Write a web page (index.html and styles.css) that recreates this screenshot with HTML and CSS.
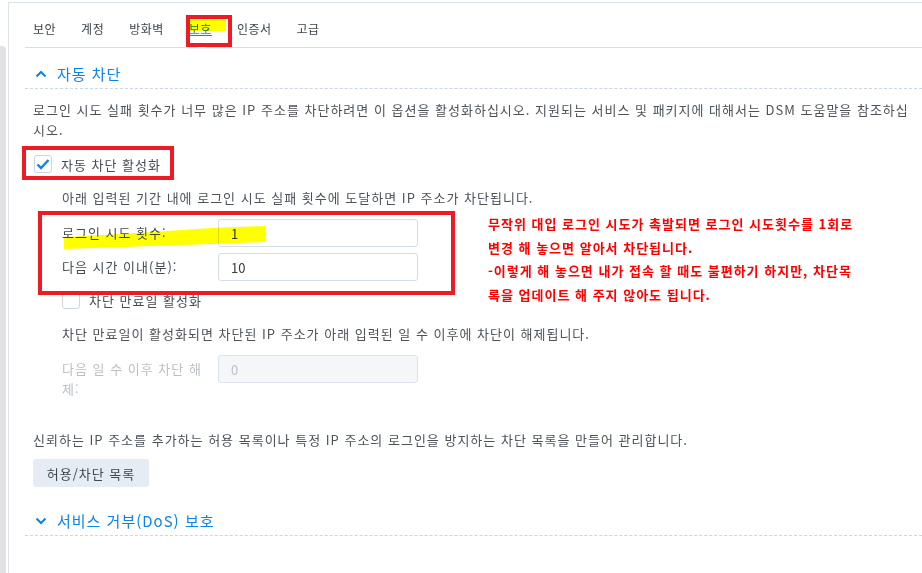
FILE: index.html
```html
<!DOCTYPE html>
<html lang="ko">
<head>
    <meta charset="UTF-8">
    <meta name="viewport" content="width=device-width, initial-scale=1.0">
    <title>보호 - 자동 차단</title>
    <link rel="stylesheet" href="styles.css">
</head>
<body>
    <div class="page">
        <div class="rail"><div class="rail-thumb"></div></div>
        <div class="panel">
            <div class="tabs">
                <span class="tab">보안</span>
                <span class="tab">계정</span>
                <span class="tab">방화벽</span>
                <span class="tab active">보호</span>
                <span class="tab">인증서</span>
                <span class="tab">고급</span>
            </div>

            <div class="section-head">
                <svg class="chevron" width="12" height="8" viewBox="0 0 12 8"><path d="M1.5 6.5 L6 2 L10.5 6.5" fill="none" stroke="currentColor" stroke-width="2"/></svg>
                <span>자동 차단</span>
            </div>

            <div class="section-body">
                <p class="desc">로그인 시도 실패 횟수가 너무 많은 IP 주소를 차단하려면 이 옵션을 활성화하십시오. 지원되는 서비스 및 패키지에 대해서는 DSM 도움말을 참조하십시오.</p>

                <div class="check first">
                    <span class="box">
                        <svg width="14" height="12" viewBox="0 0 14 12"><path d="M1.5 6.5 L5 10 L12.5 2" fill="none" stroke="#1283e0" stroke-width="2.4"/></svg>
                    </span>
                    <span>자동 차단 활성화</span>
                </div>

                <div class="indent">
                    <p class="note">아래 입력된 기간 내에 로그인 시도 실패 횟수에 도달하면 IP 주소가 차단됩니다.</p>
                    <div class="form-grid">
                        <span class="field-label">로그인 시도 횟수:</span>
                        <input class="field" type="text" value="1">
                        <span class="field-label">다음 시간 이내(분):</span>
                        <input class="field" type="text" value="10">
                    </div>

                    <div class="check second">
                        <span class="box"></span>
                        <span>차단 만료일 활성화</span>
                    </div>
                    <p class="note">차단 만료일이 활성화되면 차단된 IP 주소가 아래 입력된 일 수 이후에 차단이 해제됩니다.</p>
                    <div class="form-grid disabled">
                        <span class="field-label">다음 일 수 이후 차단 해제:</span>
                        <input class="field" type="text" value="0" disabled>
                    </div>
                </div>

                <p class="desc trust">신뢰하는 IP 주소를 추가하는 허용 목록이나 특정 IP 주소의 로그인을 방지하는 차단 목록을 만들어 관리합니다.</p>
                <button class="btn">허용/차단 목록</button>
            </div>

            <div class="section-head second">
                <svg class="chevron" width="12" height="8" viewBox="0 0 12 8"><path d="M1.5 1.5 L6 6 L10.5 1.5" fill="none" stroke="currentColor" stroke-width="2"/></svg>
                <span>서비스 거부(DoS) 보호</span>
            </div>
        </div>

        <!-- annotations drawn over the screenshot -->
        <div class="mark-yellow tab-mark"></div>
        <svg class="mark-stroke" width="210" height="30" viewBox="0 0 210 30">
            <path d="M2 12 L60 9 L120 5 L150 3 L203 1 L204 17 L150 19 L120 20 L60 22 L2 24 Z" fill="#ffff00"/>
        </svg>
        <div class="red-box box-tab"></div>
        <div class="red-box box-check"></div>
        <div class="red-box box-form"></div>
        <div class="red-note">
            무작위 대입 로그인 시도가 촉발되면 로그인 시도횟수를 1회로<br>
            변경 해 놓으면 알아서 차단됩니다.<br>
            -이렇게 해 놓으면 내가 접속 할 때도 불편하기 하지만, 차단목<br>
            록을 업데이트 해 주지 않아도 됩니다.
        </div>
    </div>
</body>
</html>
```

FILE: styles.css
```css
body {
    margin: 0;
    background-color: #ffffff;
    font-family: "Noto Sans CJK KR", "Noto Sans", sans-serif;
    font-size: 13px;
    color: #4b525a;
    letter-spacing: 1px;
}

p {
    margin: 0;
}

.page {
    position: relative;
    display: flex;
    height: 573px;
    overflow: hidden;
}

.rail {
    width: 8px;
    padding-top: 46px;
    box-sizing: border-box;
    flex-shrink: 0;
}

.rail-thumb {
    width: 6px;
    height: 100%;
    background-color: #e2e2e2;
    border-radius: 0 4px 0 0;
}

.panel {
    flex: 1;
    margin-top: 2px;
    border-top: 1px solid #dbe2ea;
    border-left: 1px solid #dbe2ea;
    padding-left: 16px;
}

.tabs {
    display: flex;
    gap: 25px;
    padding: 15px 0 7px 8px;
    border-bottom: 1px solid #d6dfe9;
    line-height: 22px;
    font-size: 12px;
    letter-spacing: 0.5px;
    color: #3a434c;
}

.tab {
    position: relative;
}

.tab.active {
    color: #0a84e6;
    text-decoration: underline;
}

.tab.active::after {
    content: "";
    position: absolute;
    left: 9px;
    bottom: -11px;
    width: 6px;
    height: 6px;
    background-color: #ffffff;
    border-left: 1px solid #d6dfe9;
    border-top: 1px solid #d6dfe9;
    transform: rotate(45deg);
}

.section-head {
    display: flex;
    align-items: center;
    gap: 10px;
    margin-top: 15px;
    padding: 0 0 3px 10px;
    border-bottom: 1px dashed #c9d6e4;
    line-height: 22px;
    font-size: 15px;
    color: #0a84e6;
}

.section-head.second {
    margin-top: 23px;
}

.section-body {
    padding: 0 8px;
}

.desc {
    margin-top: 11px;
    line-height: 20px;
}

.desc.trust {
    margin-top: 31px;
}

.check {
    display: flex;
    align-items: center;
    gap: 9px;
    height: 20px;
    color: #444c54;
}

.check.first {
    margin-top: 14px;
    padding-left: 1px;
}

.check.second {
    margin-top: 9px;
}

.box {
    width: 18px;
    height: 18px;
    box-sizing: border-box;
    border: 1px solid #cdd6e0;
    border-radius: 3px;
    display: flex;
    align-items: center;
    justify-content: center;
    background-color: #ffffff;
}

.indent {
    padding-left: 29px;
}

.note {
    margin-top: 14px;
    line-height: 20px;
}

.form-grid {
    display: grid;
    grid-template-columns: 146px 200px;
    column-gap: 10px;
    row-gap: 6px;
    margin-top: 11px;
}

.field-label {
    padding-top: 4px;
    line-height: 20px;
    color: #444c54;
}

.field {
    height: 28px;
    box-sizing: border-box;
    padding: 0 12px;
    border: 1px solid #d5dde6;
    border-radius: 3px;
    font-family: "Noto Sans CJK KR", "Noto Sans", sans-serif;
    font-size: 13px;
    color: #333a41;
    background-color: #ffffff;
    outline: none;
}

.form-grid.disabled .field-label {
    color: #b9c0c8;
}

.form-grid.disabled .field {
    background-color: #f4f6f9;
    border-color: #dde3ea;
    color: #b9c0c8;
}

.btn {
    margin-top: 9px;
    height: 28px;
    width: 116px;
    padding: 0;
    border: none;
    border-radius: 3px;
    background-color: #e6ecf3;
    font-family: "Noto Sans CJK KR", "Noto Sans", sans-serif;
    font-size: 13px;
    letter-spacing: 1px;
    color: #3f474f;
}

/* annotations */
.mark-yellow {
    position: absolute;
    background-color: #ffff00;
    mix-blend-mode: multiply;
}

.tab-mark {
    left: 186px;
    top: 18px;
    width: 40px;
    height: 13px;
}

.mark-stroke {
    position: absolute;
    left: 62px;
    top: 225px;
    mix-blend-mode: multiply;
}

.red-box {
    position: absolute;
    border: 4px solid #ed1c24;
    box-sizing: border-box;
}

.box-tab {
    left: 186px;
    top: 15px;
    width: 46px;
    height: 32px;
}

.box-check {
    left: 22px;
    top: 146px;
    width: 152px;
    height: 34px;
}

.box-form {
    left: 38px;
    top: 211px;
    width: 417px;
    height: 84px;
}

.red-note {
    position: absolute;
    left: 488px;
    top: 212px;
    line-height: 23.5px;
    font-weight: bold;
    letter-spacing: 1px;
    color: #ff0000;
    white-space: nowrap;
}
```
